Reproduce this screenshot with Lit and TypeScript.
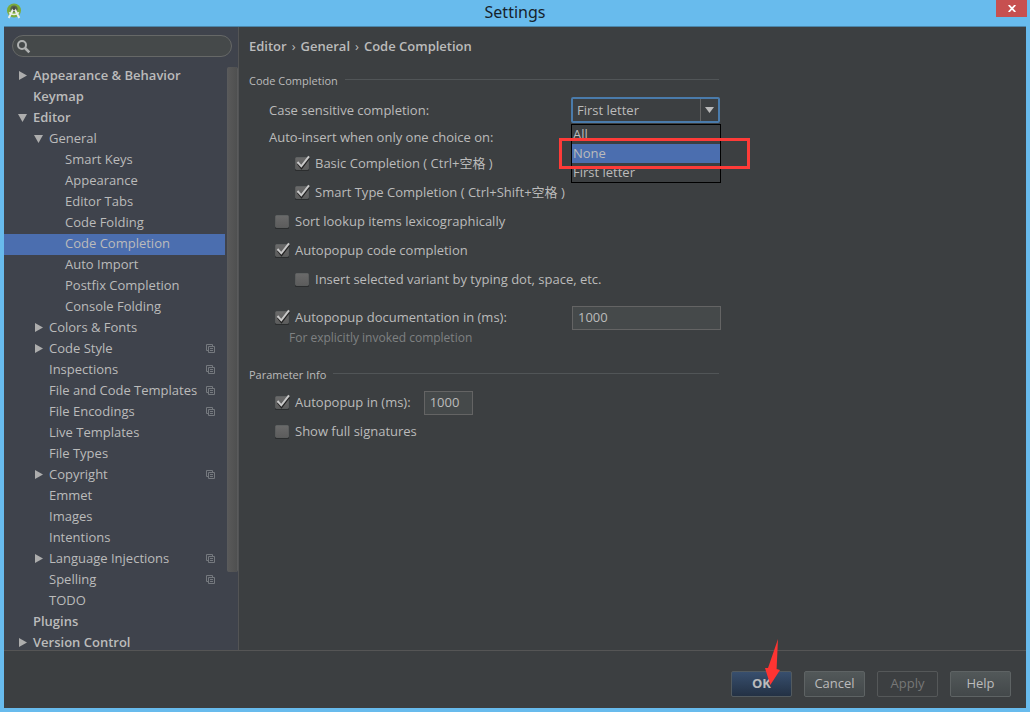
import { LitElement, html, css, svg, nothing } from "lit";
import { customElement, state } from "lit/decorators.js";
import { classMap } from "lit/directives/class-map.js";

interface TreeNode {
  label: string;
  level: number;
  arrow?: "open" | "closed";
  bold?: boolean;
  project?: boolean;
}

const NODES: TreeNode[] = [
  { label: "Appearance & Behavior", level: 0, arrow: "closed", bold: true },
  { label: "Keymap", level: 0, bold: true },
  { label: "Editor", level: 0, arrow: "open", bold: true },
  { label: "General", level: 1, arrow: "open" },
  { label: "Smart Keys", level: 2 },
  { label: "Appearance", level: 2 },
  { label: "Editor Tabs", level: 2 },
  { label: "Code Folding", level: 2 },
  { label: "Code Completion", level: 2 },
  { label: "Auto Import", level: 2 },
  { label: "Postfix Completion", level: 2 },
  { label: "Console Folding", level: 2 },
  { label: "Colors & Fonts", level: 1, arrow: "closed" },
  { label: "Code Style", level: 1, arrow: "closed", project: true },
  { label: "Inspections", level: 1, project: true },
  { label: "File and Code Templates", level: 1, project: true },
  { label: "File Encodings", level: 1, project: true },
  { label: "Live Templates", level: 1 },
  { label: "File Types", level: 1 },
  { label: "Copyright", level: 1, arrow: "closed", project: true },
  { label: "Emmet", level: 1 },
  { label: "Images", level: 1 },
  { label: "Intentions", level: 1 },
  { label: "Language Injections", level: 1, arrow: "closed", project: true },
  { label: "Spelling", level: 1, project: true },
  { label: "TODO", level: 1 },
  { label: "Plugins", level: 0, bold: true },
  { label: "Version Control", level: 0, arrow: "closed", bold: true },
];

@customElement("settings-tree")
class SettingsTree extends LitElement {
  static styles = css`
    :host { display: flex; flex: 1; min-height: 0; gap: 2px; }
    .list { flex: 1; min-width: 0; margin: 0; padding: 0; list-style: none; overflow: hidden; }
    .node {
      display: flex; align-items: center; width: 100%; height: 21px;
      padding: 0 10px 2px 14px; border: 0; background: none; color: #bbbbbb;
      font: inherit; line-height: 16px; text-align: left; white-space: nowrap;
    }
    .node.l1 { padding-left: 30px; }
    .node.l2 { padding-left: 46px; }
    .node.bold { font-weight: 600; }
    .node.selected { background: #4b6eaf; }
    .twisty { flex: none; width: 9px; height: 9px; margin-right: 6px; }
    .text { flex: 1; padding-bottom: 1px; }
    .copy { flex: none; width: 9px; height: 9px; }
    .track { flex: none; width: 11px; }
    .thumb {
      height: 505px; margin-top: 1px; width: 9px; border: 1px solid #5a5b5c; border-width: 0 1px;
      border-radius: 2px; background: linear-gradient(90deg, #595959, #4f5050);
    }
  `;

  @state() private selected = "Code Completion";

  render() {
    return html`
      <ul class="list">
        ${NODES.map((n) => html`
          <li>
            <button
              class=${classMap({ node: true, ["l" + n.level]: true, bold: !!n.bold, selected: n.label === this.selected })}
              @click=${() => (this.selected = n.label)}
            >
              <svg class="twisty" viewBox="0 0 9 9" aria-hidden="true">
                ${n.arrow === "closed" ? svg`<path d="M1 0 L9 4.5 L1 9 Z" fill="#adadad"/>` : nothing}
                ${n.arrow === "open" ? svg`<path d="M0 1 H9 L4.5 9 Z" fill="#adadad"/>` : nothing}
              </svg>
              <span class="text">${n.label}</span>
              ${n.project ? html`
                <svg class="copy" viewBox="0 0 9 9" fill="none" stroke="#75797e" aria-hidden="true">
                  <path d="M2 6.5 H0.5 V0.5 H6.5 V2 M2.5 2.5 H8.5 V8.5 H2.5 Z M4 4.5 H7 M4 6.5 H7"/>
                </svg>` : nothing}
            </button>
          </li>`)}
      </ul>
      <div class="track"><div class="thumb"></div></div>
    `;
  }
}

@customElement("app-root")
class AppRoot extends LitElement {
  static styles = css`
    :host {
      display: flex; flex-direction: column; height: 100vh; box-sizing: border-box;
      padding: 0 4px 4px; background: #68bbed; color: #bbbbbb; overflow: hidden;
      font: 13px/20px "Open Sans", "Noto Sans CJK SC", sans-serif;
    }
    .titlebar { display: grid; grid-template-columns: 1fr auto 1fr; height: 26px; flex: none; }
    .logo { width: 16px; height: 18px; margin: 3px 0 0 2px; }
    .title { margin: 0; font-family: "Noto Sans", sans-serif; font-size: 16px; line-height: 24px; font-weight: 400; color: #16222b; }
    .close {
      justify-self: end; width: 31px; height: 17px; margin-right: -1px; padding: 0; border: 0;
      background: #c75050; display: flex; align-items: center; justify-content: center;
    }
    .window { flex: 1; min-height: 0; display: flex; flex-direction: column; background: #3c3f41; border-top: 1px solid #4b86aa; }
    .body { flex: 1; min-height: 0; display: flex; }
    .sidebar {
      flex: none; box-sizing: border-box; width: 235px; display: flex; flex-direction: column;
      background: #3f434c; border-right: 1px solid #535455;
    }
    .search {
      display: flex; align-items: center; gap: 4px; box-sizing: border-box; height: 22px;
      margin: 8px 6px 9px 8px; padding: 0 8px 0 3px;
      border: 1px solid #666867; border-radius: 11px; background: #45494a;
    }
    .search input { flex: 1; min-width: 0; border: 0; padding: 0; background: none; color: #bbbbbb; font: inherit; outline: 0; }
    .content { flex: 1; min-width: 0; padding: 9px 10px 0; }
    .crumbs { display: flex; gap: 5px; font-weight: 600; height: 20px; }
    .crumbs .sep { font-weight: 400; }
    .section { max-width: 472px; }
    .heading {
      display: flex; align-items: center; gap: 7px; margin: 15px 2px 6px 0; height: 20px;
      font-size: 11px; font-weight: 400;
    }
    .heading::after { content: ""; flex: 1; height: 1px; margin-bottom: 4px; background: #515557; }
    .heading.second { margin: 21px 2px 3px 0; }
    .row { display: flex; align-items: center; height: 29px; padding-left: 26px; }
    .row.split { justify-content: space-between; }
    .row.nested { padding-left: 46px; }
    .row.case { height: 26px; padding-left: 20px; }
    .row.auto { box-sizing: border-box; height: 26px; padding: 2px 0 0 20px; }
    .row.doc { margin-top: 9px; }
    .check { display: flex; align-items: center; gap: 4px; }
    .check span { padding-bottom: 2px; }
    .check input {
      appearance: none; margin: 0; width: 16px; height: 18px;
      background: url("data:image/svg+xml,%3Csvg xmlns='http://www.w3.org/2000/svg' width='16' height='18'%3E%3ClinearGradient id='g' x2='0' y2='1'%3E%3Cstop stop-color='%236a6a6a'/%3E%3Cstop offset='1' stop-color='%235c5c5c'/%3E%3C/linearGradient%3E%3Crect y='3' width='14' height='13' rx='1' fill='%232b2d2e'/%3E%3Crect x='.5' y='2.5' width='13' height='12' rx='1' fill='url(%23g)' stroke='%23686a6a' stroke-opacity='.6'/%3E%3C/svg%3E") no-repeat;
    }
    .check input:checked {
      background: url("data:image/svg+xml,%3Csvg xmlns='http://www.w3.org/2000/svg' width='16' height='18'%3E%3ClinearGradient id='g' x2='0' y2='1'%3E%3Cstop stop-color='%236a6a6a'/%3E%3Cstop offset='1' stop-color='%235c5c5c'/%3E%3C/linearGradient%3E%3Crect y='3' width='14' height='13' rx='1' fill='%232b2d2e'/%3E%3Crect x='.5' y='2.5' width='13' height='12' rx='1' fill='url(%23g)' stroke='%23686a6a' stroke-opacity='.6'/%3E%3Cpath d='M3 8.5 L6.5 13 L14 3' fill='none' stroke='%23222' stroke-width='2.2'/%3E%3Cpath d='M2.5 7 L6.3 11.3 L14 1.3' fill='none' stroke='%23c8c8c8' stroke-width='2'/%3E%3C/svg%3E") no-repeat;
    }
    .field {
      box-sizing: border-box; height: 24px; width: 149px; padding: 0 5px 1px; border: 1px solid #646464;
      background: #45494a; color: #bbbbbb; font: inherit; outline: 0;
    }
    .field.small { width: 49px; margin-left: 13px; }
    .note { margin: 0; padding-left: 40px; height: 12px; line-height: 12px; font-size: 12px; color: #7f8182; }
    .combo { position: relative; width: 150px; }
    .combo select {
      appearance: none; box-sizing: border-box; display: block; width: 149px; height: 26px; padding: 0 24px 1px 4px;
      border: 2px solid #4a7bab; border-radius: 2px; outline: 0; color: #bbbbbb; font: inherit;
      background: url("data:image/svg+xml,%3Csvg xmlns='http://www.w3.org/2000/svg' width='18' height='22'%3E%3Cpath d='M.5 0V22' stroke='%23646464'/%3E%3Cpath d='M5 8H14L9.5 14Z' fill='%23bbbbbb'/%3E%3C/svg%3E") right top no-repeat #3c3f41;
    }
    .popup {
      position: absolute; top: 27px; left: 0; right: 0; z-index: 1; margin: 0; padding: 0;
      list-style: none; border: 1px solid #000; background: #3c3f41;
    }
    .option { height: 19px; line-height: 19px; padding-left: 1px; }
    .option.active { background: #4b6eaf; }
    .mark { position: absolute; z-index: 2; top: 41px; left: -12px; right: -29px; height: 25px; border: 3px solid #fe3b38; }
    .footer {
      flex: none; display: flex; justify-content: flex-end; align-items: center; gap: 12px;
      height: 57px; box-sizing: content-box; padding: 0 15px; border-top: 1px solid #555555;
    }
    .btn {
      position: relative; box-sizing: border-box; width: 61px; height: 26px; margin-top: 8px; padding: 0 0 1px;
      border: 1px solid #5e6364; border-radius: 2px; color: #bbbbbb; font: inherit;
      background: linear-gradient(#525859, #43484a);
    }
    .btn.primary { font-weight: 700; border-color: #525a5f; background: linear-gradient(#384f6e, #233144); }
    .btn:disabled { background: none; color: #777777; border-color: #555859; }
    .pointer { position: absolute; left: 32px; top: -34px; width: 16px; height: 48px; }
  `;

  private check(label: string, checked = false) {
    return html`<label class="check"><input type="checkbox" .checked=${checked} /><span>${label}</span></label>`;
  }

  render() {
    return html`
      <header class="titlebar">
        <svg class="logo" viewBox="0 0 16 18" aria-hidden="true">
          <circle cx="8" cy="7.5" r="7" fill="#7cab3b"/>
          <path d="M8 2.5 a3.5 3.5 0 0 1 3.5 4.5 L10.5 9 H5.5 L4.5 7 A3.5 3.5 0 0 1 8 2.5Z" fill="#56624c"/>
          <path d="M7.3 6 L2.7 15 M8.7 6 L13.3 15" stroke="#ecefe8" stroke-width="2" fill="none"/>
          <path d="M3 9.5 Q8 13.5 13 9.5" stroke="#ecefe8" stroke-width="1.5" fill="none"/>
          <circle cx="8" cy="5.5" r="1.6" fill="#474d42"/>
        </svg>
        <h1 class="title">Settings</h1>
        <button class="close" aria-label="Close">
          <svg width="8" height="7" viewBox="0 0 8 7"><path d="M0.7 0 L7.3 7 M7.3 0 L0.7 7" stroke="#fff" stroke-width="1.8"/></svg>
        </button>
      </header>
      <div class="window">
        <div class="body">
          <nav class="sidebar">
            <label class="search">
              <svg width="15" height="15" viewBox="0 0 15 15" fill="none" stroke="#b0b2b2" aria-hidden="true">
                <circle cx="6" cy="6" r="4" stroke-width="2"/><path d="M9 9 L13.3 13.3" stroke-width="2.6"/>
              </svg>
              <input type="text" aria-label="Search settings" />
            </label>
            <settings-tree></settings-tree>
          </nav>
          <main class="content">
            <div class="crumbs">
              <span>Editor</span><span class="sep">›</span><span>General</span><span class="sep">›</span><span>Code Completion</span>
            </div>
            <section class="section">
              <h2 class="heading">Code Completion</h2>
              <div class="row split case">
                <label for="case">Case sensitive completion:</label>
                <div class="combo">
                  <select id="case">
                    <option>All</option><option>None</option><option selected>First letter</option>
                  </select>
                  <ul class="popup">
                    <li class="option">All</li>
                    <li class="option active">None</li>
                    <li class="option">First letter</li>
                  </ul>
                  <div class="mark"></div>
                </div>
              </div>
              <div class="row auto">Auto-insert when only one choice on:</div>
              <div class="row nested">${this.check("Basic Completion ( Ctrl+空格 )", true)}</div>
              <div class="row nested">${this.check("Smart Type Completion ( Ctrl+Shift+空格 )", true)}</div>
              <div class="row">${this.check("Sort lookup items lexicographically")}</div>
              <div class="row">${this.check("Autopopup code completion", true)}</div>
              <div class="row nested">${this.check("Insert selected variant by typing dot, space, etc.")}</div>
              <div class="row split doc">
                ${this.check("Autopopup documentation in (ms):", true)}
                <input class="field" type="text" aria-label="Documentation delay in ms" value="1000" />
              </div>
              <p class="note">For explicitly invoked completion</p>
            </section>
            <section class="section">
              <h2 class="heading second">Parameter Info</h2>
              <div class="row">
                ${this.check("Autopopup in (ms):", true)}
                <input class="field small" type="text" aria-label="Parameter info delay in ms" value="1000" />
              </div>
              <div class="row">${this.check("Show full signatures")}</div>
            </section>
          </main>
        </div>
        <footer class="footer">
          <button class="btn primary">OK
            <svg class="pointer" viewBox="0 0 16 48" aria-hidden="true">
              <path d="M14 1 L4 30 H1 L6.3 47 L16 32 L12.6 31 Z" fill="#fd3432"/>
            </svg>
          </button>
          <button class="btn">Cancel</button>
          <button class="btn" disabled>Apply</button>
          <button class="btn">Help</button>
        </footer>
      </div>
    `;
  }
}
